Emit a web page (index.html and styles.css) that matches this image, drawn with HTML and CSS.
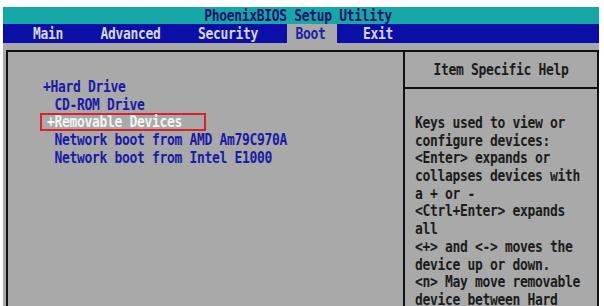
FILE: index.html
```html
<!DOCTYPE html>
<html>
<head>
<meta charset="utf-8">
<link rel="stylesheet" href="styles.css">
</head>
<body>
<div class="screen">
  <div class="titlebar"><span class="t">PhoenixBIOS Setup Utility</span></div>
  <nav class="menu">
    <span class="tab"><span class="t">Main</span></span>
    <span class="tab"><span class="t">Advanced</span></span>
    <span class="tab"><span class="t">Security</span></span>
    <span class="tab active"><span class="t">Boot</span></span>
    <span class="tab"><span class="t">Exit</span></span>
  </nav>
  <div class="workarea">
    <div class="frame">
      <div class="bootlist">
        <div class="item first"><span class="t">+Hard Drive</span></div>
        <div class="item"><span class="t"> CD-ROM Drive</span></div>
        <div class="item selected"><span class="t">+Removable Devices</span></div>
        <div class="item"><span class="t"> Network boot from AMD Am79C970A</span></div>
        <div class="item"><span class="t"> Network boot from Intel E1000</span></div>
      </div>
      <aside class="help">
        <div class="help-title"><span class="t">Item Specific Help</span></div>
        <div class="help-body">
          <div><span class="t">Keys used to view or</span></div>
          <div><span class="t">configure devices:</span></div>
          <div><span class="t">&lt;Enter&gt; expands or</span></div>
          <div><span class="t">collapses devices with</span></div>
          <div><span class="t">a + or -</span></div>
          <div><span class="t">&lt;Ctrl+Enter&gt; expands</span></div>
          <div><span class="t">all</span></div>
          <div><span class="t">&lt;+&gt; and &lt;-&gt; moves the</span></div>
          <div><span class="t">device up or down.</span></div>
          <div><span class="t">&lt;n&gt; May move removable</span></div>
          <div><span class="t">device between Hard</span></div>
        </div>
      </aside>
    </div>
  </div>
</div>
</body>
</html>
```
FILE: styles.css
```css
html, body {
  margin: 0;
  padding: 0;
  background: #ffffff;
  overflow: hidden;
}
body {
  width: 604px;
  height: 306px;
  font-family: "DejaVu Sans Mono", "Liberation Mono", monospace;
  font-weight: bold;
  font-size: 13px;
  letter-spacing: -0.33px;
}
.t {
  display: inline-block;
  transform: scaleY(1.18);
  white-space: pre;
}
.screen {
  margin: 7px 5px 0 3px;
  height: 299px;
  display: flex;
  flex-direction: column;
}
.titlebar {
  height: 17px;
  line-height: 18px;
  background: #16a8a6;
  color: #12126e;
  text-align: center;
  padding-right: 6px;
  white-space: pre;
}
.menu {
  height: 19px;
  background: #0c0ea8;
  display: flex;
  gap: 17.5px;
  padding-left: 22px;
}
.tab {
  padding: 0 12px 0 8px;
  line-height: 19px;
  color: #d6d6e6;
  white-space: pre;
}
.tab.active {
  background: #a9a9a9;
  color: #1a20a8;
}
.workarea {
  flex: 1;
  background: #a9a9a9;
  padding: 7px 0 0 3px;
  display: flex;
  min-height: 0;
}
.frame {
  flex: 1;
  border-top: 2px solid #111;
  border-left: 2px solid #111;
  border-right: 2px solid #111;
  display: grid;
  grid-template-columns: 395px 1fr;
  min-height: 0;
}
.bootlist {
  padding: 26px 0 0 39px;
  color: #1a1aa6;
}
.item {
  height: 17.6px;
  line-height: 17.6px;
  white-space: pre;
}
.item.first {
  margin-left: -4px;
}
.item.selected {
  color: #f4f4f4;
  margin-left: -7px;
  width: 166px;
  padding-left: 5px;
  box-sizing: border-box;
  border: 2px solid #d8232a;
  height: 18px;
  line-height: 14px;
}
.help {
  border-left: 2px solid #111;
  color: #1c1c1c;
}
.help-title {
  height: 35px;
  line-height: 35px;
  border-bottom: 2px solid #111;
  text-align: center;
  white-space: pre;
}
.help-body {
  padding: 25px 0 0 10px;
}
.help-body div {
  height: 17.7px;
  line-height: 17.7px;
  white-space: pre;
}
```
